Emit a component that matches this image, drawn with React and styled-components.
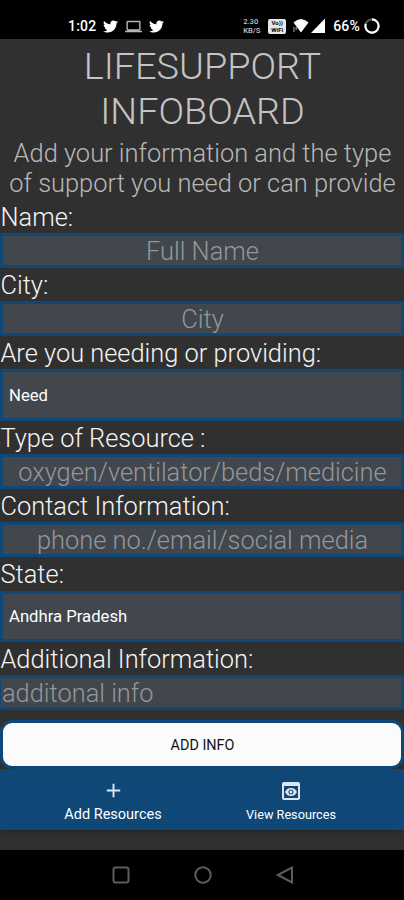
import React from 'react';
import styled, { createGlobalStyle } from 'styled-components';
import { FaTwitter } from 'react-icons/fa';
import { MdAdd, MdLaptop, MdPreview } from 'react-icons/md';

const fields = [
    { label: 'Name:', placeholder: 'Full Name' },
    { label: 'City:', placeholder: 'City' },
    { label: 'Are you needing or providing:', value: 'Need' },
    { label: 'Type of Resource :', placeholder: 'oxygen/ventilator/beds/medicine' },
    { label: 'Contact Information:', placeholder: 'phone no./email/social media' },
    { label: 'State:', value: 'Andhra Pradesh' },
    { label: 'Additional Information:', placeholder: 'additonal info', align: 'left' },
];

function StatusBar() {
    return (
        <Status>
            <StatusGroup>
                <Clock>1:02</Clock>
                <FaTwitter size={15} />
                <MdLaptop size={17} color="#b5b5b5" />
                <FaTwitter size={15} />
            </StatusGroup>
            <StatusGroup>
                <Speed>
                    <span>2.30</span>
                    <span>KB/S</span>
                </Speed>
                <VoWifi>
                    <span>Vo))</span>
                    <span>WiFi</span>
                </VoWifi>
                <Signals width="33" height="16" viewBox="0 0 33 16">
                    <path d="M0.5 4.5Q8 -2.5 15.5 4.5L8 14.5Z" fill="#fff" />
                    <path d="M1 9v5M3.2 9v3" stroke="#aaa" strokeWidth="1" />
                    <path d="M18 15L32 0.5V15Z" fill="#fff" />
                </Signals>
                <Battery>66%</Battery>
                <svg width="16" height="16" viewBox="0 0 16 16" fill="none" strokeWidth="2.1">
                    <circle cx="8" cy="8" r="6.6" stroke="#555" />
                    <path d="M8 1.4A6.6 6.6 0 1 1 1.8 5.8" stroke="#fff" />
                </svg>
            </StatusGroup>
        </Status>
    );
}

function App() {
    return (
        <>
            <GlobalStyle />
            <Screen>
                <StatusBar />
                <Header>
                    <Title>LIFESUPPORT<br />INFOBOARD</Title>
                    <Subtitle>Add your information and the type<br />of support you need or can provide</Subtitle>
                </Header>
                <Form>
                    {fields.map((field) =>
                    <React.Fragment key={field.label}>
                        <Label>{field.label}</Label>
                        {field.value
                            ? <Picker>{field.value}</Picker>
                            : <Input placeholder={field.placeholder} $align={field.align} />}
                    </React.Fragment>)}
                </Form>
                <ButtonArea>
                    <AddButton>ADD INFO</AddButton>
                </ButtonArea>
                <TabBar>
                    <Tab $shift={12}>
                        <MdAdd size={23} />
                        <TabLabel $size={14.5}>Add Resources</TabLabel>
                    </Tab>
                    <Tab $shift={-12}>
                        <MdPreview size={24} />
                        <TabLabel $size={12.7}>View Resources</TabLabel>
                    </Tab>
                </TabBar>
                <NavBar>
                    <svg width="18" height="18" viewBox="0 0 18 18">
                        <rect x="1.5" y="1.5" width="15" height="15" rx="2" />
                    </svg>
                    <svg width="18" height="18" viewBox="0 0 18 18">
                        <circle cx="9" cy="9" r="7.7" />
                    </svg>
                    <svg width="18" height="18" viewBox="0 0 18 18">
                        <path d="M16 1.5V16.5L1.8 9Z" />
                    </svg>
                </NavBar>
            </Screen>
        </>
    );
}

export default App;

const GlobalStyle = createGlobalStyle`
* {
    box-sizing: border-box;
}
body {
    margin: 0;
    background: #000;
    font-family: Roboto, sans-serif;
}`

const Screen = styled.div`
width: 404px;
height: 900px;
display: flex;
flex-direction: column;
overflow: hidden;
background: #303030;`

const Status = styled.div`
height: 39px;
flex-shrink: 0;
display: flex;
justify-content: space-between;
padding: 13px 24px 0 68px;
background: #000;
color: #fff;`

const StatusGroup = styled.div`
height: 26px;
display: flex;
align-items: center;
gap: 7px;`

const Clock = styled.span`
font-size: 14px;
font-weight: 500;
letter-spacing: 0.2px;`

const Speed = styled.div`
display: flex;
flex-direction: column;
width: 18px;
font-size: 7.6px;
font-weight: 500;
line-height: 9px;
color: #c4c4c4;`

const VoWifi = styled.div`
display: flex;
flex-direction: column;
align-items: center;
justify-content: center;
width: 18px;
height: 15px;
border-radius: 2px;
background: #e8e8e8;
color: #000;
font-size: 6px;
font-weight: 700;
line-height: 7px;`

const Signals = styled.svg`
flex-shrink: 0;`

const Battery = styled.span`
margin-right: -3px;
font-size: 14px;
font-weight: 500;
letter-spacing: 0.2px;`

const Header = styled.div`
height: 160.5px;
flex-shrink: 0;
padding: 5px 0 0 1px;
text-align: center;
font-weight: 300;
white-space: nowrap;`

const Title = styled.h1`
margin: 0;
font-size: 37.8px;
font-weight: 300;
line-height: 44.5px;
color: #c4c4c4;`

const Subtitle = styled.p`
margin: 4.5px 0 0;
font-size: 25.45px;
line-height: 30.3px;
color: #b8b8b8;`

const Form = styled.div`
display: flex;
flex-direction: column;
flex-shrink: 0;`

const Label = styled.label`
height: 33.4px;
padding-left: 0.5px;
font-size: 25.4px;
font-weight: 300;
line-height: 35px;
white-space: nowrap;
color: #f4f4f4;`

const Input = styled.input`
width: 100%;
height: 34.9px;
padding: 1px 0 0 1px;
border: 3px solid #0f4777;
border-left-width: ${props => props.$align ? '1px' : '3px'};
border-radius: 0;
background: #42464d;
font-family: inherit;
font-size: 25.4px;
font-weight: 300;
text-align: ${props => props.$align || 'center'};
color: #fff;
&::placeholder {
    color: #94979b;
    opacity: 1;
}`

const Picker = styled.div`
height: 51.1px;
display: flex;
align-items: center;
padding: 1px 0 0 6px;
border: 3px solid #0f4777;
background: #42464d;
font-size: 16.7px;
font-weight: 400;
color: #fff;`

const ButtonArea = styled.div`
flex-shrink: 0;
padding-top: 10.5px;`

const AddButton = styled.button`
display: block;
width: 100%;
height: 49px;
padding: 2px 0 0 1px;
border: 3px solid #0f4777;
border-radius: 12px;
background: #fbfbfb;
font-family: inherit;
font-size: 14.4px;
font-weight: 400;
color: #111;`

const TabBar = styled.div`
height: 61px;
flex-shrink: 0;
display: flex;
background: #0f4777;
color: #dbe6f2;
box-shadow: 0 2px 6px rgba(0, 0, 0, 0.25);`

const Tab = styled.div`
flex: 1;
display: flex;
flex-direction: column;
align-items: center;
padding-top: 10px;
padding-left: ${props => Math.max(props.$shift, 0) * 2 + 1}px;
padding-right: ${props => Math.max(-props.$shift, 0) * 2 + 1}px;`

const TabLabel = styled.span`
font-size: ${props => props.$size}px;
line-height: 18px;
margin-top: auto;
margin-bottom: 6px;
white-space: nowrap;
color: #fff;`

const NavBar = styled.div`
height: 50px;
flex-shrink: 0;
margin-top: auto;
display: flex;
justify-content: center;
align-items: center;
gap: 64px;
padding-left: 1px;
background: #000;
svg {
    fill: none;
    stroke: #5c5c5c;
    stroke-width: 2;
}`
